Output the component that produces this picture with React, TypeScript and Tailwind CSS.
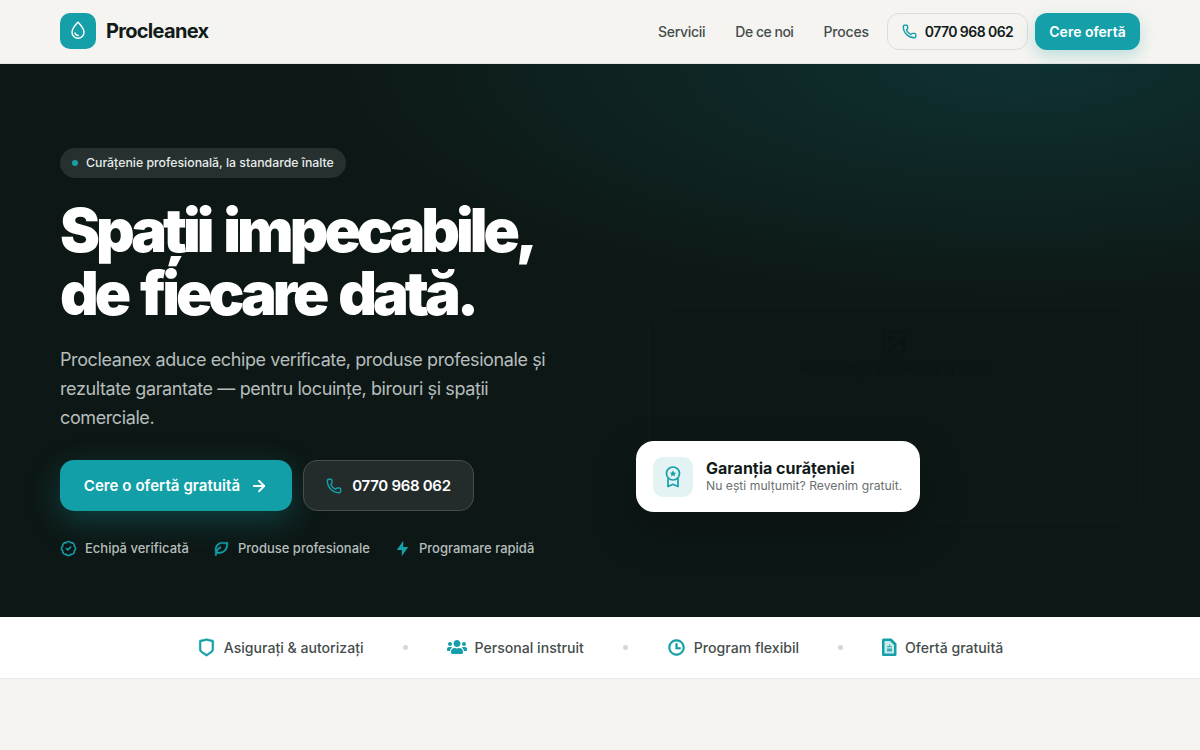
// App.tsx
import * as React from "react";
import { ArrowRight, BadgeCheck, Image as ImageIcon, Phone } from "lucide-react";
import { FaUsers } from "react-icons/fa";
import { RiFlashlightFill, RiLeafLine, RiShieldLine, RiTimeLine } from "react-icons/ri";

const body = "font-['Inter','Noto_Sans',sans-serif]";

function DropIcon() {
  return (
    <svg width="24" height="24" viewBox="0 0 20 20" fill="none" stroke="currentColor" strokeWidth="1.2" strokeLinecap="round" strokeLinejoin="round">
      <path d="M10 2.6c2.6 3 5 5.2 5 8.4a5 5 0 0 1-10 0c0-3.200 2.400-5.400 5-8.400z" />
      <path d="M7.500 11.600c.3 1.300 1.300 2.100 2.700 2.200" />
    </svg>
  );
}

function MedalIcon() {
  return (
    <svg width="20" height="24" viewBox="0 0 20 24" fill="none" stroke="currentColor" strokeWidth="1.700" strokeLinejoin="round">
      <circle cx="10" cy="8.500" r="6.500" />
      <path d="M10 5.300l1 2.100 2.200.3-1.600 1.500.4 2.200-2-1.100-2 1.100.4-2.200-1.600-1.500 2.200-.3z" fill="currentColor" stroke="none" />
      <path d="M5 13.500v8l5-2.200 5 2.200v-8" />
    </svg>
  );
}

function OfferIcon() {
  return (
    <svg width="15" height="18" viewBox="0 0 15 18" fill="none">
      <path d="M1.500 0.500h8l5 5v11a1.500 1.500 0 0 1-1.500 1.500h-11.500A1.500 1.500 0 0 1 0 16.500v-14.500A1.500 1.500 0 0 1 1.500 0.500z" fill="currentColor" />
      <path d="M2.500 3h5.500l4 4v8.500H2.500z" fill="#c9e9eb" />
      <path d="M7 6.500h1v1.500h1.800v1.200H5.200V8H7zM5 10.500h5v3H5z" fill="currentColor" opacity="0.8" />
    </svg>
  );
}

const perks = [
  { icon: <BadgeCheck size={17} strokeWidth={2.2} />, label: "Echipă verificată" },
  { icon: <RiLeafLine size={17} stroke="currentColor" strokeWidth={0.7} />, label: "Produse profesionale" },
  { icon: <RiFlashlightFill size={17} />, label: "Programare rapidă" },
];

const strip = [
  { icon: <RiShieldLine size={19} stroke="currentColor" strokeWidth={0.8} />, label: "Asigurați & autorizați" },
  { icon: <FaUsers size={20} />, label: "Personal instruit" },
  { icon: <RiTimeLine size={19} stroke="currentColor" strokeWidth={0.8} />, label: "Program flexibil" },
  { icon: <OfferIcon />, label: "Ofertă gratuită" },
];

export default function App() {
  return (
    <div className={`${body} h-[750px] overflow-hidden bg-[#f5f4f0]`}>
      <Header />
      <Hero />
      <Strip />
    </div>
  );
}

function Header() {
  return (
    <header className="h-[64px] px-[60px] pb-px flex items-center justify-between bg-[#f5f4f0] border-b border-[#e4e3df]">
      <div className="flex items-center gap-[10px]">
        <div className="w-9 h-9 rounded-[10px] bg-[#159fa8] flex items-center justify-center text-white">
          <DropIcon />
        </div>
        <span className="text-[20px] font-bold tracking-[-0.035em] text-[#111b1a]">Procleanex</span>
      </div>
      <nav className="flex items-center">
        <a className="text-[14px] tracking-[-0.02em] font-medium text-[#454d4c] mr-[30px]">Servicii</a>
        <a className="text-[14px] tracking-[-0.035em] font-medium text-[#454d4c] mr-[30px]">De ce noi</a>
        <a className="text-[14px] tracking-[-0.01em] font-medium text-[#454d4c] mr-[18px]">Proces</a>
        <a className="h-[37px] w-[141px] rounded-[12px] border border-[#dcdcd8] flex items-center justify-center gap-2 text-[14px] tracking-[-0.04em] font-semibold text-[#111b1a]">
          <Phone size={15} strokeWidth={2.2} className="text-[#159fa8]" />
          0770 968 062
        </a>
        <a className="ml-[7px] h-[37px] w-[105px] rounded-[12px] bg-[#159fa8] flex items-center justify-center text-[14px] font-semibold text-white shadow-[0_6px_16px_rgba(21,159,168,0.25)]">
          Cere ofertă
        </a>
      </nav>
    </header>
  );
}

function Hero() {
  return (
    <section className="h-[553px] px-[60px] pt-[84px] flex bg-[#0d1816] bg-[radial-gradient(ellipse_700px_240px_at_85%_0%,#0f3131_0%,#0d1816_100%)]">
      <div className="w-[576px] shrink-0">
        <div className="inline-flex items-center h-[30px] px-3 gap-2 rounded-full bg-[#25302f] text-[12.300px] font-medium text-[#e6ebea]">
          <span className="w-[6px] h-[6px] rounded-full bg-[#159fa8]" />
          Curățenie profesională, la standarde înalte
        </div>
        <h1 className="mt-[21px] text-[60px] leading-[63px] font-black tracking-[-0.067em] [word-spacing:5px] text-white">
          Spații impecabile,
          <br />
          de fiecare dată.
        </h1>
        <p className="mt-[20px] w-[500px] text-[18px] leading-[29px] tracking-[-0.022em] text-[#b6bdbc]">
          Procleanex aduce echipe verificate, produse profesionale și rezultate garantate — pentru locuințe, birouri și spații comerciale.
        </p>
        <div className="mt-[28px] flex gap-[11px]">
          <a className="h-[51px] w-[232px] pt-px rounded-[14px] bg-[#129fa8] flex items-center justify-center gap-[10px] text-[15px] tracking-[0.005em] font-semibold text-white shadow-[0_10px_30px_rgba(21,159,168,0.28)]">
            Cere o ofertă gratuită
            <ArrowRight size={18} strokeWidth={2.4} />
          </a>
          <a className="h-[51px] w-[171px] pt-px rounded-[14px] border border-[#454e4d] bg-[#232c2b] flex items-center justify-center gap-[10px] text-[15px] tracking-[-0.02em] font-semibold text-white">
            <Phone size={16} strokeWidth={2.2} className="text-[#159fa8]" />
            0770 968 062
          </a>
        </div>
        <div className="mt-[28px] flex gap-6">
          {perks.map((p) => (
            <div key={p.label} className="flex items-center gap-2 text-[13px] font-medium text-[#b6bdbc]">
              <span className="text-[#159fa8]">{p.icon}</span>
              {p.label}
            </div>
          ))}
        </div>
      </div>
      <div className="relative flex-1 mt-[156px] mb-[96px] ml-[12px] border border-[#0f1b19] rounded-[20px] flex flex-col items-center pt-[24px]">
        <ImageIcon size={26} strokeWidth={1.500} className="text-[#0a1413]" />
        <span className="mt-[6px] text-[12.500px] text-[#0a1413]">Foto: echipă Procleanex la lucru</span>
        <div className="absolute left-[-13px] top-[136px] w-[284px] h-[71px] rounded-[18px] bg-white flex items-center px-[17px] gap-[13px] shadow-[0_18px_40px_rgba(0,0,0,0.3)]">
          <div className="w-10 h-10 rounded-[10px] bg-[#e3f3f4] flex items-center justify-center text-[#159fa8]">
            <MedalIcon />
          </div>
          <div>
            <div className="text-[16px] leading-[18px] font-bold text-[#111b1a]">Garanția curățeniei</div>
            <div className="text-[12.200px] leading-[17px] text-[#6b7170]">Nu ești mulțumit? Revenim gratuit.</div>
          </div>
        </div>
      </div>
    </section>
  );
}

function Strip() {
  return (
    <div className="h-[62px] bg-white border-b border-[#eceae6] flex items-center justify-center">
      {strip.map((s, i) => (
        <React.Fragment key={s.label}>
          {i > 0 && <span className="mx-[39px] w-[5px] h-[5px] rounded-full bg-[#d5d7d6]" />}
          <div className="flex items-center gap-2 text-[14.100px] font-medium text-[#454d4c]">
            <span className="text-[#159fa8]">{s.icon}</span>
            {s.label}
          </div>
        </React.Fragment>
      ))}
    </div>
  );
}
